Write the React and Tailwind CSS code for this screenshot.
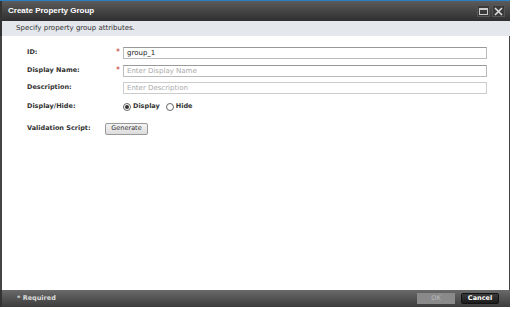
import React from "react";

const font = { fontFamily: '"DejaVu Sans", Verdana, sans-serif' };

function Row({ label, required, children, className = "" }) {
  return (
    <div className={`flex items-center h-[12px] ${className}`}>
      <div className="w-[114px] shrink-0 pl-[25px] text-[6.5px] font-bold text-[#333] whitespace-nowrap">{label}</div>
      <div className="w-[7px] shrink-0 text-[#c0392b] text-[8px] leading-none">{required ? "*" : ""}</div>
      {children}
    </div>
  );
}

function Radio({ checked, label }) {
  return (
    <label className="flex items-center gap-[2px] text-[6.5px] font-bold text-[#333]">
      <span className="w-[8px] h-[8px] rounded-full border border-[#666] bg-white flex items-center justify-center">
        {checked && <span className="w-[4px] h-[4px] rounded-full bg-[#333]" />}
      </span>
      {label}
    </label>
  );
}

export default function App() {
  return (
    <div className="w-[514px] h-[309px] bg-white" style={font}>
      <div className="w-[510px] h-[307px] flex flex-col">
        <div className="h-[1px] bg-[#2b7fc3]" />
        <div className="h-[20px] flex items-center justify-between pl-[6px] pr-[5px] bg-gradient-to-b from-[#5c5c5c] to-[#2f2f2f] border-l-2 border-[#333]">
          <span className="text-white text-[8px] font-bold" style={{ fontFamily: '"Liberation Sans", Arial, sans-serif' }}>Create Property Group</span>
          <div className="flex gap-[2px]">
            <div className="w-[13px] h-[12px] bg-[#3a3a3a] border border-[#555] flex items-center justify-center">
              <div className="w-[9px] h-[7px] border border-[#ccc] border-t-2" />
            </div>
            <div className="w-[13px] h-[12px] bg-[#3a3a3a] border border-[#555] flex items-center justify-center">
              <svg width="9" height="9" viewBox="0 0 9 9">
                <path d="M1 1L8 8M8 1L1 8" stroke="#ddd" strokeWidth="1.6" />
              </svg>
            </div>
          </div>
        </div>
        <div className="h-[15px] bg-[#e4e7eb] flex items-center pl-[14px] border-l-2 border-[#333]">
          <span className="text-[7px] text-[#333]">Specify property group attributes.</span>
        </div>
        <div className="flex-1 bg-white border-l-2 border-r border-[#444] pt-[11px] flex flex-col">
          <Row label="ID:" required>
            <div className="w-[364px] h-[12px] border border-[#bbb] border-t-[#999] flex items-center px-[3px] text-[7px] text-[#222]">group_1</div>
          </Row>
          <Row label="Display Name:" required className="mt-[6px]">
            <div className="w-[364px] h-[12px] border border-[#bbb] border-t-[#999] flex items-center px-[3px] text-[7px] text-[#aaa]">Enter Display Name</div>
          </Row>
          <Row label="Description:" className="mt-[5px]">
            <div className="w-[364px] h-[12px] border border-[#ccc] flex items-center px-[3px] text-[7px] text-[#aaa]">Enter Description</div>
          </Row>
          <Row label="Display/Hide:" className="mt-[7px]">
            <div className="flex gap-[6px]">
              <Radio checked label="Display" />
              <Radio label="Hide" />
            </div>
          </Row>
          <div className="flex items-center mt-[10px] h-[12px]">
            <div className="w-[103px] shrink-0 pl-[25px] text-[6.5px] font-bold text-[#333] whitespace-nowrap">Validation Script:</div>
            <button className="w-[43px] h-[12px] rounded-[2px] border border-[#999] bg-gradient-to-b from-[#f4f4f4] to-[#dcdcdc] text-[6.5px] text-[#333]">Generate</button>
          </div>
        </div>
        <div className="h-[17px] flex items-center justify-between bg-gradient-to-b from-[#6a6a6a] to-[#3c3c3c] border-l-2 border-[#333] pl-[15px] pr-[11px]">
          <span className="text-[6.5px] font-bold text-[#ddd]">* Required</span>
          <div className="flex gap-[6px]">
            <button className="w-[38px] h-[11px] bg-[#8a8a8a] text-[6.5px] text-[#bbb]">OK</button>
            <button className="w-[38px] h-[11px] rounded-[2px] border border-[#111] bg-gradient-to-b from-[#3a3a3a] to-[#1c1c1c] text-[6.5px] font-bold text-white">Cancel</button>
          </div>
        </div>
      </div>
    </div>
  );
}
